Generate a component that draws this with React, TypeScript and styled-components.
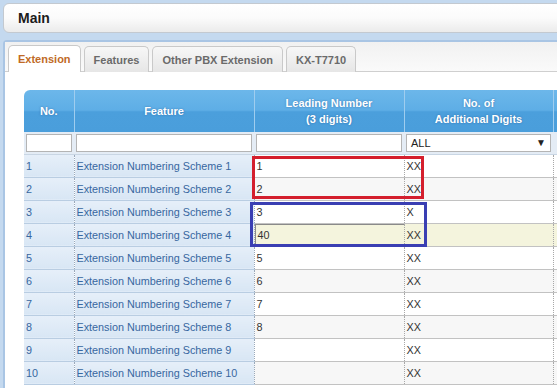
import React from 'react';
import styled, { createGlobalStyle } from 'styled-components';

const GlobalStyle = createGlobalStyle`
  html, body {
    margin: 0;
    padding: 0;
    overflow: hidden;
    background: #c4d9ef;
    font-family: "Liberation Sans", Arial, sans-serif;
  }
`;

const Page = styled.div`
  width: 557px;
  height: 388px;
  overflow: hidden;
  padding: 3px 0 0 3px;
  box-sizing: border-box;
`;

const TitleBar = styled.div`
  width: 580px;
  height: 30px;
  box-sizing: border-box;
  border: 1px solid #c3c9d0;
  border-radius: 6px;
  background: linear-gradient(#ffffff, #fbfbfb 50%, #ebebeb);
  display: flex;
  align-items: center;
  padding-left: 14px;
  font-size: 14px;
  font-weight: bold;
  color: #1c1c1c;
`;

const Panel = styled.div`
  margin-top: 7px;
  width: 580px;
  height: 360px;
  box-sizing: border-box;
  border-top: 2px solid #a9c5e4;
  border-left: 2px solid #a9c5e4;
  border-top-left-radius: 4px;
  background: #ffffff;
`;

const TabBar = styled.div`
  display: flex;
  align-items: flex-end;
  gap: 3px;
  padding: 3px 0 0 3px;
  height: 30px;
  box-sizing: border-box;
  border-bottom: 1px solid #cfcfcf;
  background: linear-gradient(#f1f1f1, #fafafa);
`;

const Tab = styled.div<{ active?: boolean }>`
  box-sizing: border-box;
  padding: 0 9px;
  display: flex;
  align-items: center;
  font-size: 11px;
  font-weight: bold;
  border: 1px solid #c9c9c9;
  border-bottom: none;
  border-radius: 5px 5px 0 0;
  margin-bottom: -1px;
  color: ${({ active }) => (active ? '#c06a26' : '#6a6a6a')};
  background: ${({ active }) =>
    active ? '#ffffff' : 'linear-gradient(#f7f7f7, #e6e6e6)'};
  height: ${({ active }) => (active ? '27px' : '26px')};
`;

const Content = styled.div`
  padding: 18px 0 0 19px;
`;

const TableWrap = styled.div`
  position: relative;
  width: 560px;
`;

const Grid = styled.table`
  border-collapse: collapse;
  table-layout: fixed;
  width: 560px;
  font-size: 10.8px;
`;

const HeadRow = styled.tr`
  height: 42px;
  background: linear-gradient(#6cb7ea, #5eaee6 48%, #4b9fdc 52%, #4a9edb);
`;

const HeadCell = styled.th`
  padding: 0;
  color: #ffffff;
  font-size: 11px;
  font-weight: bold;
  text-align: center;
  line-height: 16px;
  text-shadow: 0 0 2px rgba(30, 80, 140, 0.6);
  border-right: 1px solid #9fcdef;
  &:first-child {
    border-top-left-radius: 6px;
  }
`;

const FilterRow = styled.tr`
  height: 22px;
  background: #e4ecf5;
`;

const FilterCell = styled.td`
  padding: 0 2px;
  border-bottom: 1px solid #c9d6e4;
`;

const FilterInput = styled.div`
  height: 18px;
  box-sizing: border-box;
  border: 1px solid #b4b4b4;
  background: #ffffff;
  font-size: 11px;
  color: #222;
  display: flex;
  align-items: center;
  justify-content: space-between;
  padding: 0 4px;
`;

const Row = styled.tr`
  height: 23px;
`;

const KeyCell = styled.td`
  padding: 0 2px;
  color: #3767a0;
  background: linear-gradient(#e6eff9, #d8e6f4);
  border-bottom: 1px solid #b9cde2;
  border-right: 1px dotted #9aa9ba;
  white-space: nowrap;
  overflow: hidden;
`;

const ValueCell = styled.td<{ even?: boolean; hot?: boolean }>`
  padding: 0 2px;
  color: #333333;
  background: ${({ even, hot }) => (hot ? '#f4f4dd' : even ? '#f7f7f7' : '#ffffff')};
  border-bottom: 1px solid #c2c2c2;
  border-right: 1px dotted #a8a8a8;
  white-space: nowrap;
`;

const EditBox = styled.div`
  height: 22px;
  margin: 0 -2px;
  padding: 0 2px;
  box-sizing: border-box;
  display: flex;
  align-items: center;
  border-top: 1px solid #8a8a8a;
  border-left: 1px solid #8a8a8a;
`;

const Mark = styled.div<{ color: string }>`
  position: absolute;
  box-sizing: border-box;
  border: 3px solid ${({ color }) => color};
  pointer-events: none;
`;

const rows = [
  { no: 1, lead: '1', digits: 'XX' },
  { no: 2, lead: '2', digits: 'XX' },
  { no: 3, lead: '3', digits: 'X' },
  { no: 4, lead: '40', digits: 'XX' },
  { no: 5, lead: '5', digits: 'XX' },
  { no: 6, lead: '6', digits: 'XX' },
  { no: 7, lead: '7', digits: 'XX' },
  { no: 8, lead: '8', digits: 'XX' },
  { no: 9, lead: '', digits: 'XX' },
  { no: 10, lead: '', digits: 'XX' },
];

const App: React.FC = () => {
  return (
    <Page>
      <GlobalStyle />
      <TitleBar>Main</TitleBar>
      <Panel>
        <TabBar>
          <Tab active>Extension</Tab>
          <Tab>Features</Tab>
          <Tab>Other PBX Extension</Tab>
          <Tab>KX-T7710</Tab>
        </TabBar>
        <Content>
          <TableWrap>
            <Grid>
              <colgroup>
                <col style={{ width: 50 }} />
                <col style={{ width: 180 }} />
                <col style={{ width: 150 }} />
                <col style={{ width: 149 }} />
                <col style={{ width: 31 }} />
              </colgroup>
              <thead>
                <HeadRow>
                  <HeadCell>No.</HeadCell>
                  <HeadCell>Feature</HeadCell>
                  <HeadCell>
                    Leading Number
                    <br />
                    (3 digits)
                  </HeadCell>
                  <HeadCell>
                    No. of
                    <br />
                    Additional Digits
                  </HeadCell>
                  <HeadCell />
                </HeadRow>
                <FilterRow>
                  <FilterCell><FilterInput /></FilterCell>
                  <FilterCell><FilterInput /></FilterCell>
                  <FilterCell><FilterInput /></FilterCell>
                  <FilterCell>
                    <FilterInput>
                      <span>ALL</span>
                      <span style={{ fontSize: 10 }}>▼</span>
                    </FilterInput>
                  </FilterCell>
                  <FilterCell />
                </FilterRow>
              </thead>
              <tbody>
                {rows.map((r) => {
                  const even = r.no % 2 === 0;
                  const hot = r.no === 4;
                  return (
                    <Row key={r.no}>
                      <KeyCell>{r.no}</KeyCell>
                      <KeyCell>Extension Numbering Scheme {r.no}</KeyCell>
                      <ValueCell even={even} hot={hot}>
                        {hot ? <EditBox>{r.lead}</EditBox> : r.lead}
                      </ValueCell>
                      <ValueCell even={even} hot={hot}>{r.digits}</ValueCell>
                      <ValueCell even={even} hot={hot} />
                    </Row>
                  );
                })}
              </tbody>
            </Grid>
            <Mark color="#d41f2d" style={{ left: 228, top: 66, width: 172, height: 43 }} />
            <Mark color="#3a3fb3" style={{ left: 226, top: 112, width: 177, height: 45 }} />
          </TableWrap>
        </Content>
      </Panel>
    </Page>
  );
};

export default App;
